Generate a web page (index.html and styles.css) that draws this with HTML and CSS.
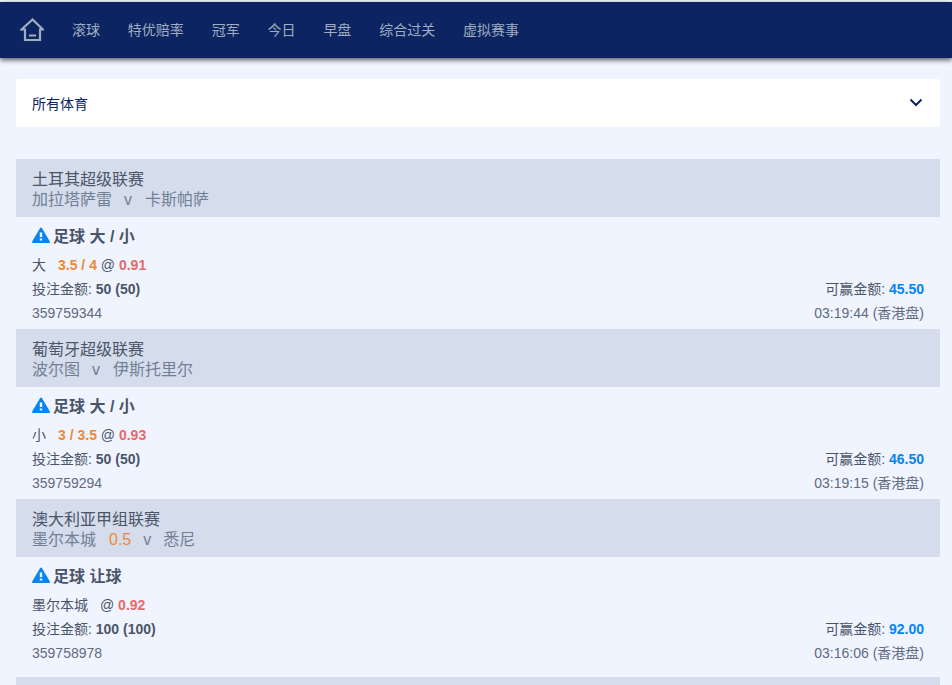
FILE: index.html
```html
<!DOCTYPE html>
<html lang="zh">
<head>
    <meta charset="UTF-8">
    <meta name="viewport" content="width=device-width, initial-scale=1.0">
    <title>注单</title>
    <link rel="stylesheet" href="styles.css">
</head>
<body>
    <div class="header">
        <svg class="home" width="24" height="24" viewBox="0 0 24 24">
            <path d="M1.5 11.5 12.5 1.5 23 11.5H20V22H5V11.5Z" fill="none" stroke="currentColor" stroke-width="2.2" stroke-linejoin="miter"/>
            <path d="M9 17.5h7" fill="none" stroke="currentColor" stroke-width="2"/>
        </svg>
        <a class="nav-link">滚球</a>
        <a class="nav-link">特优赔率</a>
        <a class="nav-link">冠军</a>
        <a class="nav-link">今日</a>
        <a class="nav-link">早盘</a>
        <a class="nav-link">综合过关</a>
        <a class="nav-link">虚拟赛事</a>
    </div>

    <div class="container">
        <div class="select-box">
            <span>所有体育</span>
            <svg width="16" height="16" viewBox="0 0 16 16">
                <path d="M2.5 4.5 8 10l5.5-5.5" fill="none" stroke="#0c2461" stroke-width="2"/>
            </svg>
        </div>

        <div class="league">
            <div>土耳其超级联赛</div>
            <div class="teams"><span>加拉塔萨雷</span><span class="vs">v</span><span>卡斯帕萨</span></div>
        </div>
        <div class="bet">
            <div class="bet-title">
                <svg class="warn" width="18" height="16" viewBox="0 0 18 16"><path d="M9 1.5 17 15H1Z" fill="#0784f2" stroke="#0784f2" stroke-width="2" stroke-linejoin="round"/><path d="M9 5.5v4.5M9 11.5v2" stroke="#fff" stroke-width="2.4"/></svg>
                足球 大 / 小
            </div>
            <div class="bet-row"><span>大<span class="line">3.5 / 4</span> @ <b class="odds">0.91</b></span></div>
            <div class="bet-row"><span>投注金额: <b>50 (50)</b></span><span>可赢金额: <b class="win">45.50</b></span></div>
            <div class="bet-row"><span class="muted">359759344</span><span class="muted">03:19:44 (香港盘)</span></div>
        </div>

        <div class="league">
            <div>葡萄牙超级联赛</div>
            <div class="teams"><span>波尔图</span><span class="vs">v</span><span>伊斯托里尔</span></div>
        </div>
        <div class="bet">
            <div class="bet-title">
                <svg class="warn" width="18" height="16" viewBox="0 0 18 16"><path d="M9 1.5 17 15H1Z" fill="#0784f2" stroke="#0784f2" stroke-width="2" stroke-linejoin="round"/><path d="M9 5.5v4.5M9 11.5v2" stroke="#fff" stroke-width="2.4"/></svg>
                足球 大 / 小
            </div>
            <div class="bet-row"><span>小<span class="line">3 / 3.5</span> @ <b class="odds">0.93</b></span></div>
            <div class="bet-row"><span>投注金额: <b>50 (50)</b></span><span>可赢金额: <b class="win">46.50</b></span></div>
            <div class="bet-row"><span class="muted">359759294</span><span class="muted">03:19:15 (香港盘)</span></div>
        </div>

        <div class="league">
            <div>澳大利亚甲组联赛</div>
            <div class="teams"><span>墨尔本城</span><span class="handicap">0.5</span><span class="vs">v</span><span>悉尼</span></div>
        </div>
        <div class="bet last">
            <div class="bet-title">
                <svg class="warn" width="18" height="16" viewBox="0 0 18 16"><path d="M9 1.5 17 15H1Z" fill="#0784f2" stroke="#0784f2" stroke-width="2" stroke-linejoin="round"/><path d="M9 5.5v4.5M9 11.5v2" stroke="#fff" stroke-width="2.4"/></svg>
                足球 让球
            </div>
            <div class="bet-row"><span>墨尔本城<span class="at">@</span> <b class="odds">0.92</b></span></div>
            <div class="bet-row"><span>投注金额: <b>100 (100)</b></span><span>可赢金额: <b class="win">92.00</b></span></div>
            <div class="bet-row"><span class="muted">359758978</span><span class="muted">03:16:06 (香港盘)</span></div>
        </div>

        <div class="league"></div>
    </div>
</body>
</html>
```

FILE: styles.css
```css
html, body {
    height: 100%;
    overflow: hidden;
}

body {
    margin: 0;
    padding-top: 2px;
    box-sizing: border-box;
    background-color: #f0f4ff;
    font-family: "Liberation Sans", "Noto Sans CJK SC", sans-serif;
    font-size: 14px;
    color: #4a5568;
}

.header {
    display: flex;
    align-items: center;
    height: 56px;
    padding: 0 0 2px 20px;
    box-sizing: border-box;
    background-color: #0c2461;
    box-shadow: 0 2px 5px rgba(0, 0, 0, 0.65);
}

.home {
    color: #a0aec0;
    margin-top: 2px;
    margin-right: 28px;
}

.nav-link {
    margin-right: 27.85px;
    color: #a0aec0;
    font-size: 14px;
}

.container {
    padding: 21px 12px 0 16px;
}

.select-box {
    display: flex;
    justify-content: space-between;
    align-items: center;
    height: 48px;
    padding: 0 16px;
    margin-bottom: 32px;
    background-color: #fff;
    border-radius: 3px;
    color: #0c2461;
}

.league {
    height: 58px;
    padding: 11px 16px 0;
    box-sizing: border-box;
    background-color: #d5dcec;
    font-size: 16px;
    line-height: 20px;
}

.teams {
    display: flex;
    color: #718096;
}

.vs {
    margin: 0 13px 0 12px;
}

.handicap {
    margin-left: 13px;
    color: #ed8936;
}

.handicap + .vs {
    margin-right: 12px;
}

.bet {
    height: 112px;
    padding: 0 16px;
    box-sizing: border-box;
}

.bet.last {
    height: 120px;
}

.bet-title {
    display: flex;
    align-items: center;
    gap: 3px;
    height: 38px;
    margin-bottom: -2px;
    padding-bottom: 2px;
    box-sizing: border-box;
    font-size: 16px;
    font-weight: bold;
}

.warn {
    flex-shrink: 0;
}

.bet-row {
    display: flex;
    justify-content: space-between;
    height: 24px;
    line-height: 24px;
}

.line {
    margin-left: 12px;
    font-weight: bold;
    color: #ed8936;
}

.at {
    margin-left: 12px;
}

.odds {
    color: #e56b6b;
}

.win {
    color: #0784f2;
}

.muted {
    color: #5f6b7f;
}
```
